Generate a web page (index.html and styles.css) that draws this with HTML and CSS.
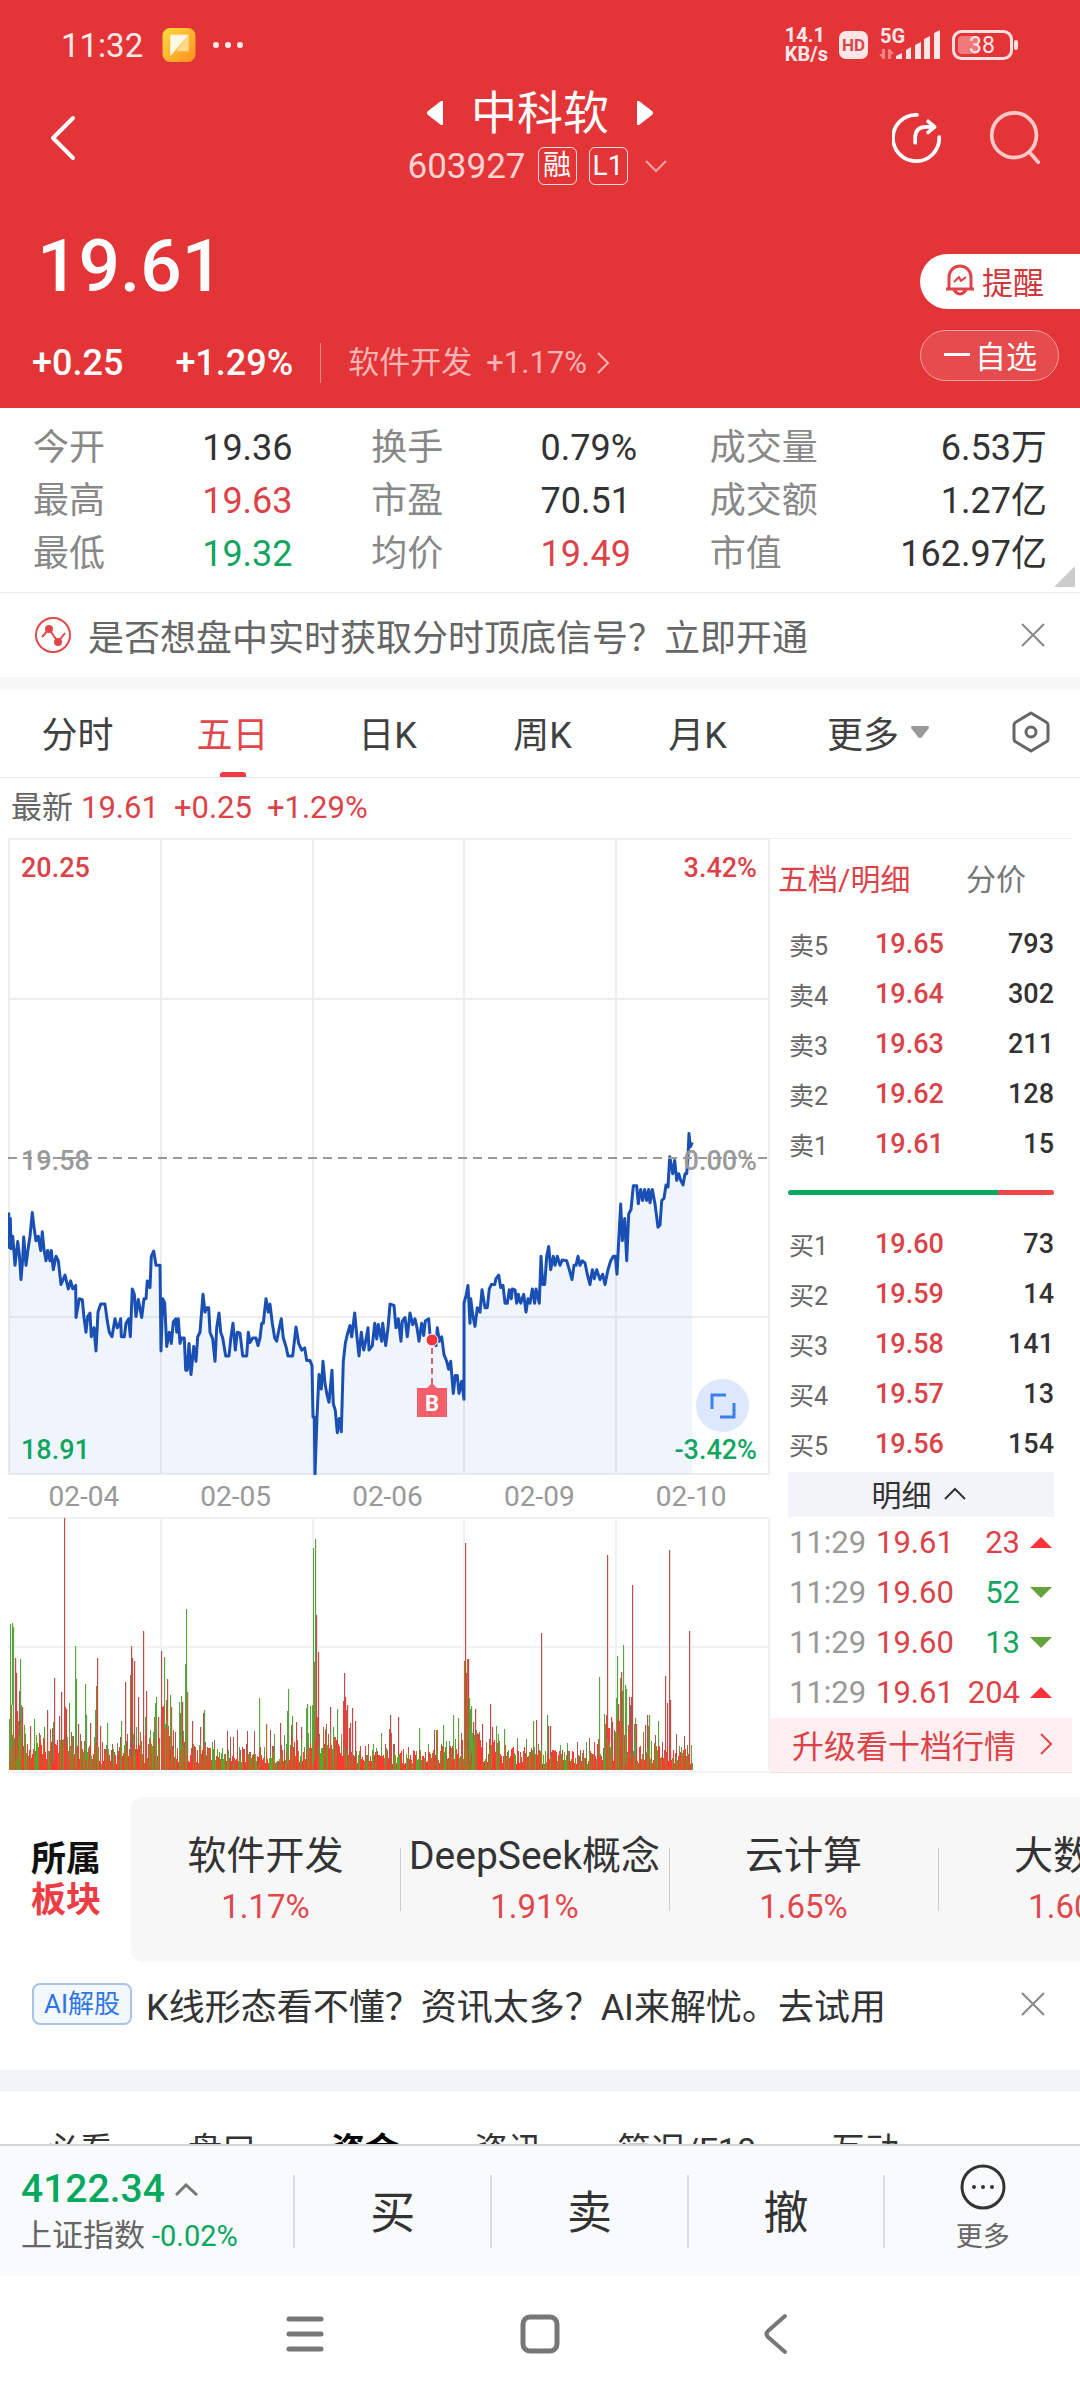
FILE: index.html
```html
<!DOCTYPE html>
<html lang="zh-CN">
<head>
<meta charset="utf-8">
<meta name="viewport" content="width=device-width, initial-scale=1">
<title>中科软 603927</title>
<link rel="stylesheet" href="styles.css">
</head>
<body>
<div class="scroll">
  <header class="hero">
    <div class="status">
      <span class="clock">11:32</span>
      <svg class="app-icon" width="34" height="34" viewBox="0 0 34 35"><defs><linearGradient id="note" x1="0" y1="0" x2="1" y2="1"><stop offset="0" stop-color="#fddc3c"/><stop offset="1" stop-color="#ff8f1f"/></linearGradient></defs><rect width="34" height="35" rx="8" fill="url(#note)"/><path d="M27 7v17H14z" fill="#ffd98c"/><path d="M8 7h19L8 29z" fill="#fff8e6"/></svg>
      <svg width="32" height="8" viewBox="0 0 32 8" fill="#ffeded"><circle cx="4" cy="4" r="3"/><circle cx="16" cy="4" r="3"/><circle cx="28" cy="4" r="3"/></svg>
      <div class="status-right">
        <span class="speed">14.1<br>KB/s</span>
        <span class="hd">HD</span>
        <svg width="62" height="48" viewBox="0 -8 62 48" fill="#ffe6e6"><text x="1" y="14" font-size="20" font-weight="700">5G</text><g opacity=".45"><path d="M6 20v10H4L0 25h3v-5zM9 30V20h2l4 5h-3v5z"/></g><path d="M17 27l6-3v6h-6zM27 21l5-3v12h-5zM36 16l6-3v17h-6zM45 10l6-3v23h-6zM55 4l6-3v29h-6z"/></svg>
        <svg width="66" height="32" viewBox="0 0 66 32"><rect x="1.500" y="2.500" width="58" height="27" rx="8" fill="none" stroke="#ffe1e1" stroke-width="3"/><rect x="6" y="7" width="21" height="18" rx="4" fill="#f07a7b"/><rect x="62" y="11" width="4" height="10" rx="2" fill="#ffe1e1"/><text x="30" y="24" text-anchor="middle" font-size="23" fill="#ffe6e6">38</text></svg>
      </div>
    </div>
    <div class="topbar">
      <button class="icon-btn back" aria-label="返回"><svg width="26" height="46" viewBox="0 0 26 46"><path d="M23 3L3 23l20 20" fill="none" stroke="#fff" stroke-width="4" stroke-linecap="round" stroke-linejoin="round"/></svg></button>
      <div class="title-block">
        <div class="title-row">
          <button class="icon-btn" aria-label="上一只"><svg width="17" height="26" viewBox="0 0 17 26"><path d="M16 1v24h-2L1 15q-2-2 0-4L14 1z" fill="#fff"/></svg></button>
          <h1>中科软</h1>
          <button class="icon-btn" aria-label="下一只"><svg width="17" height="26" viewBox="0 0 17 26"><path d="M1 1v24h2l13-10q2-2 0-4L3 1z" fill="#fff"/></svg></button>
        </div>
        <div class="code-row">
          <span class="code">603927</span><span class="tag">融</span><span class="tag">L1</span>
          <svg class="code-arrow" width="22" height="13" viewBox="0 0 22 13"><path d="M1 1l10 10L21 1" fill="none" stroke="#f6a5a5" stroke-width="2"/></svg>
        </div>
      </div>
      <div class="actions">
        <button class="icon-btn" aria-label="分享"><svg width="50" height="52" viewBox="0 0 54 54" fill="none" stroke="#fff" stroke-width="4" stroke-linecap="round" stroke-linejoin="round"><path d="M27 2A25 25 0 1 0 51 26"/><path d="M25 32v-5q0-12 12-12h9M39 9l7 6-7 6"/></svg></button>
        <button class="icon-btn" aria-label="搜索"><svg width="54" height="54" viewBox="0 2 54 58" fill="none" stroke="#ffc9c9" stroke-width="4" stroke-linecap="round"><circle cx="26" cy="28" r="24"/><path d="M44 48l8 9"/></svg></button>
      </div>
    </div>
    <div class="quote">
      <div>
        <div class="price">19.61</div>
        <div class="changes"><span>+0.25</span><span class="pct">+1.29%</span><a class="industry" href="#industry">软件开发<span>+1.17%</span><svg width="13" height="22" viewBox="0 0 13 22"><path d="M1 1l10 10L1 21" fill="none" stroke="#f8b4b4" stroke-width="2"/></svg></a></div>
      </div>
      <div class="pills">
        <button class="pill remind"><svg width="30" height="32" viewBox="0 0 30 32" fill="none" stroke="#e04448" stroke-width="3" stroke-linejoin="round"><path d="M4 25V13a11 11 0 0 1 22 0v12M1 25h28M9 26q6 8 12 0"/><path d="M9 18l5-5 2 4 5-4" stroke-width="2"/></svg>提醒</button>
        <button class="pill favor"><svg width="26" height="3" viewBox="0 0 26 3"><path d="M0 0h26v3H0z" fill="#fff"/></svg>自选</button>
      </div>
    </div>
  </header>

  <section class="stats">
    <span>今开</span><b>19.36</b><span>换手</span><b>0.79%</b><span>成交量</span><b class="end">6.53万</b>
    <span>最高</span><b class="up">19.63</b><span>市盈</span><b>70.51</b><span>成交额</span><b class="end">1.27亿</b>
    <span>最低</span><b class="down">19.32</b><span>均价</span><b class="up">19.49</b><span>市值</span><b class="end">162.97亿</b>
    <svg class="corner" width="21" height="21" viewBox="0 0 21 21"><path d="M21 0v21H0z" fill="#ccc"/></svg>
  </section>

  <section class="notice">
    <svg width="37" height="37" viewBox="0 0 37 37" fill="none" stroke="#e2474c" stroke-width="2"><circle cx="18" cy="18" r="17"/><path d="M7 20l7-8 9 13 7-9"/><circle cx="14" cy="12" r="3" fill="#e2474c"/><circle cx="23" cy="25" r="3" fill="#e2474c"/></svg>
    <a href="#signal">是否想盘中实时获取分时顶底信号？立即开通</a>
    <button class="icon-btn" aria-label="关闭"><svg width="26" height="26" viewBox="0 0 26 26"><path d="M2 2l22 22M24 2L2 24" stroke="#888" stroke-width="2"/></svg></button>
  </section>

  <nav class="periods">
    <button>分时</button><button class="active">五日</button><button>日K</button><button>周K</button><button>月K</button>
    <button>更多<svg width="18" height="12" viewBox="0 0 18 12"><path d="M1 0h16q1 0 1 2l-7 9q-2 2-4 0L0 2q0-2 1-2z" fill="#9a9a9a"/></svg></button>
    <button aria-label="设置"><svg width="40" height="42" viewBox="0 0 40 42" fill="none" stroke="#666" stroke-width="3" stroke-linejoin="round"><path d="M20 2l15 9q2 1 2 3v14q0 2-2 3l-15 9-15-9q-2-1-2-3V14q0-2 2-3z"/><circle cx="20" cy="21" r="5"/></svg></button>
  </nav>

  <div class="latest"><span>最新</span><b>19.61</b><b>+0.25</b><b>+1.29%</b></div>

  <section class="market">
    <div class="charts">
      <div class="price-wrap">
        <svg class="chart" viewBox="0 0 762 637">
          <g fill="none" stroke="#ededee" stroke-width="2"><path d="M1 1h760v635H1zM153 1v635M305 1v635M456 1v635M608 1v635M1 161h760M1 479h760"/></g>
          <g id="price-line"></g>
          <path d="M0 320h762" stroke="#999" stroke-width="2" stroke-dasharray="9 6"/>
          <g font-size="27" font-weight="500">
            <text x="13" y="39" fill="#dc4348">20.25</text><text x="13" y="332" fill="#999">19.58</text><text x="13" y="621" fill="#12a562">18.91</text>
            <g text-anchor="end"><text x="749" y="39" fill="#dc4348">3.42%</text><text x="749" y="332" fill="#999">0.00%</text><text x="749" y="621" fill="#12a562">-3.42%</text></g>
          </g>
          <path d="M424 510v36" stroke="#d9606e" stroke-width="2" stroke-dasharray="6 4"/>
          <circle cx="424" cy="502" r="6" fill="#f0363e" stroke="#fff" stroke-width="1"/>
          <path d="M409 550h10l5-5 5 5h10v29h-30z" fill="#f25e69"/>
          <text x="424" y="573" text-anchor="middle" font-size="22" font-weight="700" fill="#fff">B</text>
        </svg>
        <button class="expand" aria-label="全屏"><svg width="26" height="26" viewBox="0 0 26 26" fill="none" stroke="#3b80ea" stroke-width="3"><path d="M2 16V2h14M24 10v14H10"/></svg></button>
      </div>
      <div class="dates"><span>02-04</span><span>02-05</span><span>02-06</span><span>02-09</span><span>02-10</span></div>
      <svg class="chart" viewBox="0 0 762 256">
        <path d="M0 1h762M0 130h762M153 0v253M305 0v253M456 0v253M608 0v253M761 0v253" stroke="#f1f1f1" stroke-width="2"/>
        <path d="M0 255h762" stroke="#e6e6e6" stroke-width="1"/>
        <g id="volume-bars" shape-rendering="crispEdges"></g>
      </svg>
    </div>
    <aside class="book">
      <div class="book-tabs"><button class="active">五档/明细</button><button>分价</button></div>
      <table class="levels">
        <tr><th>卖5</th><td>19.65</td><td>793</td></tr>
        <tr><th>卖4</th><td>19.64</td><td>302</td></tr>
        <tr><th>卖3</th><td>19.63</td><td>211</td></tr>
        <tr><th>卖2</th><td>19.62</td><td>128</td></tr>
        <tr><th>卖1</th><td>19.61</td><td>15</td></tr>
      </table>
      <div class="ratio"><i></i></div>
      <table class="levels">
        <tr><th>买1</th><td>19.60</td><td>73</td></tr>
        <tr><th>买2</th><td>19.59</td><td>14</td></tr>
        <tr><th>买3</th><td>19.58</td><td>141</td></tr>
        <tr><th>买4</th><td>19.57</td><td>13</td></tr>
        <tr><th>买5</th><td>19.56</td><td>154</td></tr>
      </table>
      <button class="detail-btn">明细<svg width="22" height="13" viewBox="0 0 22 13"><path d="M1 12L11 2l10 10" fill="none" stroke="#333" stroke-width="2"/></svg></button>
      <table class="ticks">
        <tr><th>11:29</th><td>19.61</td><td class="up">23</td><td><svg width="22" height="11"><path d="M0 11L11 0l11 11z" fill="#fb3236"/></svg></td></tr>
        <tr><th>11:29</th><td>19.60</td><td class="down">52</td><td><svg width="22" height="11"><path d="M0 0h22L11 11z" fill="#64a33c"/></svg></td></tr>
        <tr><th>11:29</th><td>19.60</td><td class="down">13</td><td><svg width="22" height="11"><path d="M0 0h22L11 11z" fill="#64a33c"/></svg></td></tr>
        <tr><th>11:29</th><td>19.61</td><td class="up">204</td><td><svg width="22" height="11"><path d="M0 11L11 0l11 11z" fill="#fb3236"/></svg></td></tr>
      </table>
      <a class="upgrade" href="#level2">升级看十档行情<svg width="12" height="22" viewBox="0 0 12 22"><path d="M1 1l10 10L1 21" fill="none" stroke="#e2474c" stroke-width="2"/></svg></a>
    </aside>
  </section>

  <section class="sectors">
    <h2>所属<em>板块</em></h2>
    <div class="sector-list">
      <a href="#s1">软件开发<b>1.17%</b></a><a href="#s2">DeepSeek概念<b>1.91%</b></a><a href="#s3">云计算<b>1.65%</b></a><a href="#s4">大数据<b>1.60%</b></a>
    </div>
  </section>

  <section class="ai">
    <span class="ai-tag">AI解股</span>
    <a href="#ai">K线形态看不懂？资讯太多？AI来解忧。去试用</a>
    <button class="icon-btn" aria-label="关闭"><svg width="26" height="26" viewBox="0 0 26 26"><path d="M2 2l22 22M24 2L2 24" stroke="#888" stroke-width="2"/></svg></button>
  </section>

  <nav class="info-tabs"><button>必看</button><button>盘口</button><button class="active">资金</button><button>资讯</button><button>简况/F10</button><button>互动</button></nav>
</div>

<footer class="trade">
  <div class="index">
    <div class="index-value">4122.34<svg width="23" height="13" viewBox="0 0 23 13"><path d="M1 12L11 2l11 10" fill="none" stroke="#777" stroke-width="3"/></svg></div>
    <div class="index-name">上证指数<span>-0.02%</span></div>
  </div>
  <button>买</button><button>卖</button><button>撤</button>
  <button class="more"><svg width="46" height="46" viewBox="0 0 46 46"><circle cx="23" cy="23" r="21" fill="none" stroke="#333" stroke-width="3"/><g fill="#333"><circle cx="14" cy="23" r="2"/><circle cx="23" cy="23" r="2"/><circle cx="32" cy="23" r="2"/></g></svg>更多</button>
</footer>

<nav class="system">
  <button aria-label="最近任务"><svg width="38" height="38" viewBox="0 0 38 38"><path d="M3 4h32M3 19h32M3 34h32" stroke="#777" stroke-width="5" stroke-linecap="round"/></svg></button>
  <button aria-label="主页"><svg width="40" height="40" viewBox="0 0 40 40"><rect x="3" y="3" width="34" height="34" rx="7" fill="none" stroke="#777" stroke-width="5"/></svg></button>
  <button aria-label="后退"><svg width="26" height="42" viewBox="0 0 26 42"><path d="M23 3L6 18q-3 3 0 6l17 15" fill="none" stroke="#777" stroke-width="4" stroke-linecap="round"/></svg></button>
</nav>
<script src="charts.js"></script>
</body>
</html>
```
FILE: styles.css
```css
* { box-sizing: border-box; }
body {
  margin: 0;
  height: 100vh;
  display: flex;
  flex-direction: column;
  background: #fff;
  color: #333;
  font-family: Roboto, "Noto Sans CJK SC", sans-serif;
  font-size: 36px;
}
button { margin: 0; padding: 0; border: 0; background: none; color: inherit; font: inherit; }
a { color: inherit; text-decoration: none; }
h1, h2 { margin: 0; }
b, em, i { font-weight: inherit; font-style: normal; }
svg { display: block; flex: none; }
.icon-btn { flex: none; }
.up { color: #dc4348; }
.down { color: #12a562; }
.scroll { flex: 1; min-height: 0; overflow: hidden; }

.hero { background: #e33537; color: #fff; }
.status { display: flex; align-items: center; height: 90px; padding: 0 62px 0 61px; color: #ffeaea; }
.clock { width: 101px; font-size: 33px; }
.app-icon { margin-right: 16px; }
.status-right { display: flex; align-items: center; gap: 11px; margin-left: auto; }
.speed { font-size: 20px; line-height: 19px; font-weight: 700; }
.hd { padding: 0 3px; border-radius: 7px; background: #ffe6e6; color: #d8484b; font-size: 17px; line-height: 28px; font-weight: 700; }
.topbar { display: grid; grid-template-columns: 1fr auto 1fr; align-items: center; padding: 0 38px; }
.back { justify-self: start; margin-left: 12px; }
.title-row { display: flex; justify-content: center; align-items: center; gap: 27px; height: 46px; }
.title-row h1 { font-size: 46px; font-weight: 400; line-height: 46px; }
.code-row { display: flex; justify-content: center; align-items: center; gap: 12px; height: 38px; margin: 11px 6px 0 0; color: #ffd3d3; font-size: 35px; }
.tag { min-width: 39px; height: 38px; border: 1px solid #ffdcdc; border-radius: 6px; color: #fff; font-size: 28px; line-height: 35px; text-align: center; }
.code-arrow { margin-left: 5px; }
.actions { display: flex; justify-content: flex-end; align-items: center; gap: 46px; }
.quote { display: flex; justify-content: space-between; padding: 41px 0 25px 32px; }
.price { padding-left: 5px; font-size: 73px; line-height: 80px; font-weight: 500; }
.changes { display: flex; margin-top: 37px; font-size: 36px; line-height: 40px; font-weight: 500; }
.pct { margin: 0 27px 0 52px; }
.industry { display: flex; align-items: center; padding-left: 27px; border-left: 1px solid #f08a8a; color: #f8b4b4; font-size: 31px; font-weight: 400; }
.industry span { margin: 0 10px 0 14px; }
.pills { display: flex; flex-direction: column; gap: 21px; padding-top: 28px; }
.pill { display: flex; align-items: center; padding-bottom: 3px; font-size: 31px; font-weight: 400; }
.remind { gap: 7px; height: 55px; padding: 0 34px 3px 25px; border-radius: 28px 0 0 28px; background: #fff; color: #d0383c; }
.favor { gap: 5px; height: 51px; margin-right: 21px; padding: 0 21px 3px 23px; border: 1px solid #f3a0a0; border-radius: 26px; background: #e64b4d; }

.stats { position: relative; display: grid; grid-template-columns: 169fr 169fr 169fr 169fr 120fr 217fr; padding: 14px 33px 11px; border-bottom: 1px solid #eee; line-height: 53px; }
.stats span { color: #888; }
.stats .end { text-align: right; }
.corner { position: absolute; right: 5px; bottom: 5px; }
.notice, .ai { display: flex; align-items: center; gap: 16px; height: 84px; padding: 0 34px 0 35px; }
.notice { color: #666; }
.notice .icon-btn, .ai .icon-btn { margin-left: auto; }
.periods { display: grid; grid-template-columns: repeat(5, 155fr) 206fr 99fr; height: 101px; border-top: 13px solid #f7f7f7; border-bottom: 1px solid #e8e8e8; color: #404040; }
.periods button { position: relative; display: flex; justify-content: center; align-items: center; gap: 12px; padding-bottom: 3px; }
.periods .active { color: #e2474c; }
.periods .active::after { content: ""; position: absolute; left: 50%; bottom: 0; width: 26px; height: 5px; margin-left: -13px; border-radius: 3px 3px 0 0; background: #ee3b44; }
.latest { display: flex; gap: 15px; padding: 0 11px; color: #dc4348; font-size: 31px; line-height: 60px; }
.latest span { margin-right: -7px; color: #666; }

.market { display: grid; grid-template-columns: minmax(0, 1fr) 302px; padding: 0 8px; }
.price-wrap { position: relative; }
.chart { width: 100%; height: auto; }
.expand { position: absolute; right: 21px; bottom: 43px; display: flex; justify-content: center; align-items: center; width: 53px; height: 53px; border-radius: 50%; background: #dde8fc; }
.dates { display: grid; grid-template-columns: repeat(5, 1fr); padding-right: 3px; color: #999; font-size: 28px; line-height: 44px; height: 42px; text-align: center; }
.book { display: flex; flex-direction: column; border-top: 1px solid #eee; border-bottom: 1px solid #e6e6e6; }
.book-tabs { display: flex; justify-content: space-between; height: 80px; padding: 0 46px 5px 8px; color: #777; font-size: 30px; }
.book-tabs .active { color: #dc4348; }
table { border-collapse: collapse; table-layout: fixed; }
th, td { height: 50px; padding: 0; font-weight: 400; text-align: left; }
.levels { width: 265px; margin: 0 18px 0 19px; font-size: 27px; }
.levels th { width: 86px; color: #666; font-size: 25px; }
.levels td:nth-child(2), .ticks td:nth-child(2) { color: #dc4348; }
.levels td { font-weight: 500; }
.levels td:nth-child(3), .ticks td:nth-child(3) { text-align: right; }
.ratio { display: flex; align-items: center; height: 50px; padding: 0 18px 3px; }
.ratio::after { content: ""; width: 21%; height: 5px; border-radius: 0 3px 3px 0; background: #f0474b; }
.ratio i { flex: 1; height: 5px; border-radius: 3px 0 0 3px; background: #06a85f; }
.detail-btn { display: flex; justify-content: center; align-items: center; gap: 12px; height: 45px; margin: 3px 18px 0; padding: 0 5px 3px 0; background: #f3f4f9; font-size: 30px; }
.ticks { width: 264px; margin: 0 18px 1px 19px; font-size: 31px; }
.ticks th { width: 87px; color: #999; }
.ticks td:nth-child(2) { width: 80px; }
.ticks td:last-child { width: 33px; padding-left: 10px; }
.upgrade { display: flex; justify-content: space-between; align-items: center; height: 54px; padding: 0 20px 2px 22px; background: #ffeff0; color: #dc4348; font-size: 32px; }

.sectors { display: flex; align-items: center; margin-top: 24px; }
.sectors h2 { flex: none; width: 131px; padding-left: 31px; color: #111; font-size: 35px; line-height: 41px; font-weight: 700; }
.sectors em { display: block; color: #ee3b44; }
.sector-list { display: flex; flex: 1; min-width: 0; overflow: hidden; padding: 32px 0 31px; border-radius: 12px 0 0 12px; background: #f7f7f8; }
.sector-list a { position: relative; flex: 0 0 269px; font-size: 39px; line-height: 54px; text-align: center; white-space: nowrap; }
.sector-list a + a::before { content: ""; position: absolute; left: 0; top: 19px; height: 63px; border-left: 1px solid #ccc; }
.sector-list b { display: block; color: #e2474c; font-size: 33px; line-height: 48px; }
.ai { gap: 14px; padding-left: 32px; }
.ai-tag { height: 42px; padding: 0 10px; border: 2px solid #a9c4e6; border-radius: 8px; background: #f3f8ff; color: #2f75e6; font-size: 26px; line-height: 38px; }
.info-tabs { display: flex; gap: 75px; margin-top: 24px; padding-left: 45px; border-top: 21px solid #f3f4f9; font-size: 34px; line-height: 118px; }
.info-tabs .active { color: #000; font-weight: 700; }

.trade { display: grid; grid-template-columns: 294fr repeat(4, 197fr); align-items: center; height: 132px; border-top: 2px solid #d3d4d8; background: #f9fafc; }
.trade button { display: flex; flex-direction: column; align-items: center; justify-content: center; height: 73px; padding-bottom: 3px; border-left: 2px solid #dcdce0; font-size: 45px; font-weight: 400; }
.trade .more { gap: 9px; color: #666; font-size: 27px; line-height: 36px; }
.index { padding-left: 21px; }
.index-value { display: flex; align-items: center; gap: 10px; color: #06a85f; font-size: 39px; line-height: 50px; font-weight: 500; }
.index-name { display: flex; gap: 7px; color: #666; font-size: 31px; line-height: 44px; }
.index-name span { color: #06a85f; font-size: 29px; }
.system { display: grid; grid-template-columns: repeat(3, 1fr); height: 124px; padding: 0 188px 8px; background: #fff; }
.system button { display: flex; justify-content: center; align-items: center; }
```
FILE: charts.js
```js
const NS = 'http://www.w3.org/2000/svg';
function add(parent, name, attrs) {
  const el = document.createElementNS(NS, name);
  for (const key in attrs) el.setAttribute(key, attrs[key]);
  parent.appendChild(el);
}

// Five-day price series: time unit, depth unit.
const prices = `26,857 28,935 31,870 33,938 38,910 42,945 45,975 53,922 58,950 63,1007 68,960 71,912 78,975 84,940 90,910 97,857 102,890 108,920 115,910 122,942 127,900 132,940 138,965 143,942 150,965 154,942 160,985 168,955 175,965 183,1018 195,997 205,1028 212,1010 218,1028 227,1020 228,1092 238,1050 247,1052 252,1092 258,1125 263,1090 270,1082 274,1135 282,1115 288,1167 294,1080 302,1062 315,1062 322,1100 328,1125 336,1135 345,1095 352,1115 358,1108 362,1095 364,1135 373,1135 378,1105 386,1095 391,1135 397,1028 403,1040 408,1090 415,1052 425,1092 432,1050 438,1050 442,1010 450,1025 454,955 461,943 468,975 480,975 483,1167 488,1050 494,1060 500,1157 508,1125 514,1150 520,1102 527,1095 530,1125 535,1095 540,1150 545,1138 553,1138 557,1210 562,1210 567,1150 573,1220 581,1157 588,1190 593,1135 600,1125 609,1040 615,1080 620,1070 626,1070 630,1125 638,1140 645,1190 650,1115 657,1082 662,1125 668,1138 677,1178 687,1178 693,1135 699,1105 706,1165 712,1125 720,1127 728,1178 740,1178 745,1125 750,1148 758,1138 768,1138 774,1155 780,1138 785,1105 790,1105 798,1050 805,1080 810,1062 817,1105 824,1138 830,1145 838,1115 844,1095 850,1138 858,1157 864,1178 878,1178 888,1113 896,1150 905,1165 914,1160 920,1188 930,1188 936,1200 939,1315 943,1315 945,1443 951,1315 957,1220 964,1252 969,1190 975,1240 981,1265 987,1282 996,1210 1000,1285 1006,1300 1012,1350 1018,1318 1024,1348 1030,1190 1036,1150 1042,1130 1050,1110 1055,1135 1064,1082 1070,1130 1077,1178 1084,1125 1091,1165 1097,1145 1104,1115 1107,1165 1117,1155 1124,1105 1130,1140 1135,1108 1145,1145 1148,1105 1157,1155 1164,1115 1170,1062 1182,1065 1188,1115 1195,1095 1203,1145 1207,1100 1215,1092 1222,1135 1230,1082 1238,1108 1245,1095 1251,1115 1257,1145 1265,1105 1271,1132 1276,1100 1286,1095 1290,1130 1300,1140 1308,1155 1312,1115 1318,1145 1325,1135 1332,1175 1340,1190 1346,1208 1352,1190 1360,1262 1366,1222 1372,1222 1377,1262 1385,1235 1392,1275 1392,1060 1399,1040 1404,1020 1410,1105 1412,1050 1418,1085 1425,1112 1432,1070 1440,1080 1446,1030 1455,1070 1462,1070 1468,1028 1474,1018 1484,1018 1488,1005 1496,997 1502,1025 1509,1020 1515,1060 1522,1060 1528,1030 1534,1050 1537,1028 1545,1030 1550,1060 1555,1040 1562,1060 1571,1040 1578,1080 1584,1050 1590,1060 1597,1028 1604,1060 1608,1028 1618,1060 1623,955 1628,1018 1634,1018 1640,955 1646,933 1652,985 1660,955 1665,975 1672,955 1680,975 1687,963 1700,965 1708,985 1716,1007 1722,975 1728,975 1734,955 1740,975 1747,965 1755,970 1762,995 1770,1018 1777,985 1783,1005 1790,985 1800,1007 1808,995 1815,1018 1824,985 1832,965 1840,955 1846,955 1851,995 1856,920 1862,838 1867,920 1874,870 1880,965 1886,860 1893,850 1900,797 1910,797 1915,837 1922,805 1928,830 1934,805 1940,830 1946,805 1950,835 1957,805 1965,837 1974,890 1980,885 1985,830 1992,825 1998,795 2004,800 2009,732 2018,770 2024,740 2030,785 2036,770 2042,785 2049,795 2055,770 2060,770 2064,730 2067,680 2071,710 2077,700`;
const points = prices.split(' ').map(p => {
  const [x, y] = p.split(',').map(Number);
  return [(x / 3 - 8).toFixed(1), (y / 2.24 - 8).toFixed(1)].join(',');
}).join(' ');
const line = document.getElementById('price-line');
add(line, 'polygon', { points: `1,636 ${points} 684,636`, fill: '#2d74e8', 'fill-opacity': 0.07 });
add(line, 'polyline', { points, fill: 'none', stroke: '#1a50b4', 'stroke-width': 3, 'stroke-linejoin': 'round' });

// Volume peaks: time unit, top, colour key (r/g thin, R/G/b solid).
const peaks = `28 657 g,31 372 g,37 369 g,40 381 g,34 615 b,46 474 r,49 519 r,52 633 R,58 573 r,61 477 g,64 615 g,67 621 r,73 684 r,91 678 r,103 657 g,121 705 g,133 681 g,142 630 r,157 684 r,160 666 g,163 534 r,176 648 r,184 576 r,193 54 r,196 621 R,199 627 r,208 609 g,220 708 r,226 438 g,229 537 g,235 672 r,241 723 r,256 552 g,259 645 g,271 669 r,286 630 g,289 558 b,292 474 r,301 678 r,322 669 g,337 732 r,352 729 g,364 663 g,376 546 r,382 702 r,391 525 b,394 438 r,397 474 r,403 483 r,400 703 b,408 681 g,415 591 r,430 393 r,436 651 g,439 573 r,451 690 g,463 651 b,466 609 g,469 591 g,475 651 r,484 453 r,487 621 R,490 618 R,493 471 g,499 600 b,502 537 r,511 585 g,514 621 b,526 696 r,538 606 g,541 639 b,544 588 g,547 606 r,556 492 g,559 327 g,562 576 b,577 663 r,601 681 r,610 639 r,613 630 g,637 726 g,682 693 r,691 711 r,700 711 r,712 690 r,742 693 r,763 693 r,778 594 g,799 672 b,811 690 r,823 702 g,841 669 r,853 705 g,862 633 g,865 567 g,874 675 r,877 648 g,889 666 r,904 681 r,919 624 g,922 612 g,931 618 g,937 615 G,940 144 g,943 486 b,946 117 g,949 345 r,952 651 R,955 456 r,976 687 g,991 621 r,1000 681 g,1012 627 g,1024 702 g,1030 603 R,1033 519 r,1036 591 R,1039 630 R,1042 615 r,1048 684 R,1051 669 r,1057 624 r,1066 663 r,1144 699 g,1168 687 r,1171 645 r,1174 699 R,1195 651 r,1258 684 g,1303 690 r,1309 690 b,1312 690 b,1330 675 g,1339 723 g,1348 723 g,1360 645 g,1366 717 r,1375 654 g,1384 699 r,1393 483 b,1396 129 r,1399 519 R,1402 477 b,1405 477 r,1408 594 G,1411 627 G,1414 618 g,1420 666 r,1426 627 r,1435 702 r,1447 672 r,1471 612 r,1477 681 r,1489 678 g,1495 702 g,1513 687 g,1552 714 g,1600 663 g,1609 660 r,1615 732 g,1624 399 r,1642 645 g,1645 678 r,1651 678 r,1702 729 g,1732 726 r,1759 726 g,1768 714 r,1795 717 b,1798 531 g,1813 642 g,1816 672 b,1819 645 R,1822 165 r,1825 684 R,1828 684 R,1834 651 r,1837 666 r,1843 690 r,1849 594 G,1852 468 g,1855 612 r,1858 663 R,1861 534 b,1864 516 r,1867 573 b,1870 435 g,1873 705 R,1876 555 g,1879 567 g,1885 675 R,1888 591 r,1891 615 r,1894 591 r,1897 255 r,1903 672 b,1906 654 g,1909 672 r,1936 675 r,1942 645 r,1945 678 b,1948 645 g,1975 663 g,1987 726 r,1996 528 r,2002 609 r,2008 150 r,2011 600 r,2029 702 r,2053 708 r,2068 393 r,2074 735 g`;
const colours = { r: '#b2524f', g: '#5c9f48', R: '#ff3a32', G: '#4caf2a', b: '#a87329' };
const bars = document.getElementById('volume-bars');
function bar(x, h, colour) {
  add(bars, 'rect', { x, y: 253 - h, width: 1, height: h, fill: colours[colour] });
}
let seed = 7;
const random = () => (seed = (seed * 16807) % 2147483647) / 2147483647;
peaks.split(',').forEach(p => {
  const [x, top, colour] = p.split(' ');
  const left = Math.round(x / 3 - 8);
  const h = (810 - top) / 3;
  if (h > 40) add(bars, 'rect', { x: left + 1, y: 253 - h, width: 1, height: h, fill: 'gG'.includes(colour) ? '#e3f7d8' : '#fbdad8' });
  bar(left, h, colour);
});
for (let x = 1; x < 685; x++) {
  if (x === 152 || x === 304 || x === 456 || x === 608) continue;
  const day = (x % 152) / 152;
  const busy = 14 + 36 * Math.exp(-day * 6) + (day > 0.85 ? 10 : 0) + (x < 152 ? 8 : 0);
  const h = 6 + busy * random();
  const pick = random();
  bar(x, h, pick < 0.5 ? 'R' : pick < 0.65 ? 'G' : 'b');
  if (pick > 0.7) {
    const tip = 10 * random();
    add(bars, 'rect', { x, y: 253 - h - tip, width: 1, height: tip, fill: colours[pick > 0.85 ? 'r' : 'g'] });
  }
}
```
